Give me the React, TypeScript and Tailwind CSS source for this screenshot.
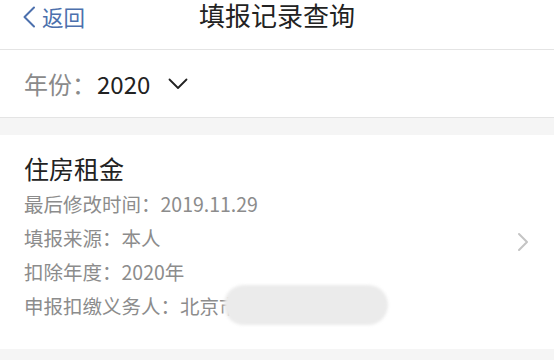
import React from 'react';

const FONT = { fontFamily: '"Noto Sans CJK SC", "Noto Sans", sans-serif' };

function BackChevron() {
  return (
    <svg width="14" height="22" viewBox="0 0 14 22" fill="none">
      <path d="M12 1.5 L2.5 11 L12 20.5" stroke="#4c70ad" strokeWidth="2" strokeLinecap="round" strokeLinejoin="round" />
    </svg>
  );
}

function DownChevron() {
  return (
    <svg width="20" height="12" viewBox="0 0 20 12" fill="none">
      <path d="M1.5 1.5 L10 10 L18.5 1.5" stroke="#222222" strokeWidth="1.8" strokeLinecap="round" strokeLinejoin="round" />
    </svg>
  );
}

function RightChevron() {
  return (
    <svg width="14" height="20" viewBox="0 0 14 20" fill="none">
      <path d="M3 2 L11 10 L3 18" stroke="#c4c4c4" strokeWidth="2" strokeLinecap="round" strokeLinejoin="round" />
    </svg>
  );
}

const rows = [
  { label: '最后修改时间：', value: '2019.11.29' },
  { label: '填报来源：', value: '本人' },
  { label: '扣除年度：', value: '2020年' },
];

export default function App() {
  return (
    <div className="w-[554px] h-[360px] overflow-hidden bg-[#f5f5f5]" style={FONT}>
      {/* header */}
      <div className="h-[50px] bg-white border-b border-[#e4e4e4] relative">
        <div className="flex justify-center">
          <span className="text-[26px] leading-[30px] text-[#222]">填报记录查询</span>
        </div>
        <div className="absolute left-[22px] top-0 h-[33px] flex items-center gap-[6px]">
          <BackChevron />
          <span className="text-[21.5px] leading-[33px] text-[#4c70ad]">返回</span>
        </div>
      </div>

      {/* year selector */}
      <div className="h-[68px] bg-white border-b border-[#e4e4e4] flex items-center pl-[24px]">
        <span className="text-[24px] text-[#8a8a8a]">年份：</span>
        <span className="text-[24px] text-[#222] ml-[1px]">2020</span>
        <span className="ml-[18px] flex items-center"><DownChevron /></span>
      </div>

      <div className="h-[17px]" />

      {/* record card */}
      <div className="bg-white h-[214px] flex items-start pl-[24px] pr-[24px]">
        <div className="flex-1 flex flex-col pt-[16px]">
          <div className="text-[25px] leading-[34px] text-[#222]">住房租金</div>
          <div className="mt-[2px] flex flex-col text-[19.5px] leading-[34px] text-[#8c8c8c]">
            {rows.map((r) => (
              <div key={r.label}>
                {r.label}
                {r.value}
              </div>
            ))}
            <div className="flex">
              <span>申报扣缴义务人：北京</span>
              <span className="relative">
                市某某公司
                <span className="absolute left-[5px] top-[-4px] h-[40px] w-[164px] rounded-full bg-[#ebebeb] blur-[1.5px]" />
              </span>
            </div>
          </div>
        </div>
        <div className="self-center"><RightChevron /></div>
      </div>
    </div>
  );
}
